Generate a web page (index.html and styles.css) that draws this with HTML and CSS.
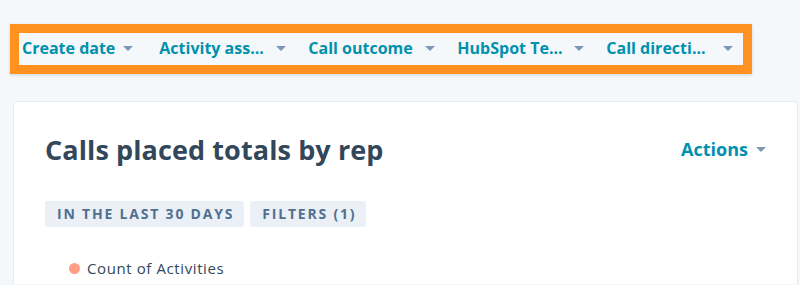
FILE: index.html
```html
<!DOCTYPE html>
<html lang="en">
<head>
<meta charset="utf-8">
<title>Calls placed totals by rep</title>
<link rel="stylesheet" href="styles.css">
</head>
<body>
<div class="filterbar">
  <div class="item first"><span class="label">Create date</span><span class="caret"></span></div>
  <div class="item"><span class="label trunc">Activity ass...</span><span class="caret"></span></div>
  <div class="item"><span class="label trunc">Call outcome</span><span class="caret"></span></div>
  <div class="item"><span class="label trunc">HubSpot Te...</span><span class="caret"></span></div>
  <div class="item"><span class="label trunc">Call directi...</span><span class="caret"></span></div>
</div>
<div class="card">
  <div class="card-head">
    <h2 class="title">Calls placed totals by rep</h2>
    <div class="actions"><span>Actions</span><span class="caret"></span></div>
  </div>
  <div class="tags">
    <span class="tag">In the last 30 days</span>
    <span class="tag">Filters (1)</span>
  </div>
  <div class="legend"><span class="dot"></span><span>Count of Activities</span></div>
</div>
</body>
</html>
```
FILE: styles.css
```css
html, body {
  margin: 0;
  padding: 0;
}
body {
  background: #f5f8fa;
  font-family: "Open Sans", "Liberation Sans", sans-serif;
  width: 800px;
  height: 285px;
  overflow: hidden;
}
.filterbar {
  box-sizing: border-box;
  margin: 24px 0 0 10px;
  width: 742px;
  height: 50px;
  border: 9px solid #ff9121;
  display: flex;
  align-items: center;
  padding: 0 0 3px 3px;
  box-shadow: 0 1px 3px rgba(0,0,0,0.15);
}
.item {
  display: flex;
  align-items: center;
  margin-right: 22px;
  color: #0091ae;
  font-weight: 700;
  font-size: 16px;
}
.item.first {
  margin-right: 26px;
}
.label {
  white-space: nowrap;
}
.label.trunc {
  width: 109px;
  overflow: hidden;
}
.caret {
  display: inline-block;
  width: 0;
  height: 0;
  border-left: 5px solid transparent;
  border-right: 5px solid transparent;
  border-top: 5px solid #7c98b6;
  margin-left: 8px;
  margin-top: 1px;
}
.card {
  box-sizing: border-box;
  margin: 27px 0 0 13px;
  width: 785px;
  height: 183px;
  background: #ffffff;
  border: 1px solid #e5ebf1;
  border-bottom: 0;
  border-radius: 4px 4px 0 0;
  padding: 30px 31px 0 31px;
}
.card-head {
  display: flex;
  align-items: center;
  justify-content: space-between;
  height: 34px;
}
.title {
  margin: 0;
  font-size: 27px;
  font-weight: 700;
  color: #33475b;
  letter-spacing: 0.1px;
}
.actions {
  display: flex;
  align-items: center;
  color: #0091ae;
  font-weight: 700;
  font-size: 18px;
}
.tags {
  display: flex;
  gap: 6px;
  margin-top: 35px;
}
.tag {
  background: #eaf0f6;
  color: #516f90;
  font-weight: 700;
  font-size: 14px;
  text-transform: uppercase;
  letter-spacing: 1.8px;
  height: 26px;
  line-height: 26px;
  padding: 0 10px 0 12px;
  border-radius: 3px;
}
.legend {
  display: flex;
  align-items: center;
  gap: 7px;
  margin-top: 31px;
  margin-left: 24px;
  color: #33475b;
  font-size: 15px;
  letter-spacing: 0.6px;
}
.dot {
  width: 11px;
  height: 11px;
  border-radius: 50%;
  background: #ff9d85;
}
```
